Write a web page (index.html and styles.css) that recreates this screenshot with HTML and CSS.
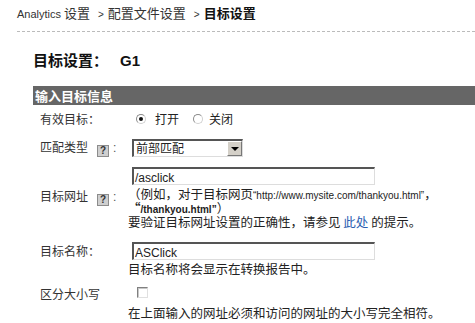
FILE: index.html
```html
<!DOCTYPE html>
<html lang="zh-CN">
<head>
<meta charset="utf-8">
<title>目标设置</title>
<link rel="stylesheet" href="styles.css">
</head>
<body>
<div class="crumbs">
  <span class="en">Analytics</span> 设置<span class="sep">&gt;</span>配置文件设置<span class="sep">&gt;</span><b>目标设置</b>
</div>
<h1 class="title">目标设置：<span class="g1">G1</span></h1>
<div class="panel">
  <div class="bar">输入目标信息</div>

  <div class="row r1">
    <div class="lbl">有效目标：</div>
    <div class="val radios">
      <span class="radio on"></span><span class="rtext">打开</span>
      <span class="radio second"></span><span class="rtext">关闭</span>
    </div>
  </div>

  <div class="row r2">
    <div class="lbl">匹配类型<span class="help">?</span><span class="colon">:</span></div>
    <div class="val">
      <div class="select"><span class="stext">前部匹配</span><span class="sbtn"><span class="tri"></span></span></div>
    </div>
  </div>

  <div class="row r3">
    <div class="lbl">目标网址<span class="help">?</span><span class="colon">:</span></div>
    <div class="val">
      <div class="input"><span class="itext">/asclick</span></div>
      <div class="note">（例如，对于目标网页<span class="url">“http://www.mysite.com/thankyou.html”</span>，<br><b><span class="q">“</span><span class="url">/thankyou.html”</span></b>）<br>要验证目标网址设置的正确性，请参见 <a class="link" href="#">此处</a> 的提示。</div>
    </div>
  </div>

  <div class="row r4">
    <div class="lbl">目标名称：</div>
    <div class="val">
      <div class="input"><span class="itext">ASClick</span></div>
      <div class="note">目标名称将会显示在转换报告中。</div>
    </div>
  </div>

  <div class="row r5">
    <div class="lbl">区分大小写</div>
    <div class="val">
      <div class="cbwrap"><span class="checkbox"></span></div>
      <div class="note">在上面输入的网址必须和访问的网址的大小写完全相符。</div>
    </div>
  </div>
</div>
</body>
</html>
```

FILE: styles.css
```css
* { box-sizing: border-box; }
body {
  margin: 0;
  background: #fff;
  color: #222;
  font-family: "Noto Sans CJK SC", sans-serif;
  font-size: 12px;
  overflow: hidden;
}
.en { font-family: "Liberation Sans", sans-serif; font-size: 11px; }

.crumbs {
  margin-left: 17px;
  height: 32px;
  padding-top: 6px;
  line-height: 14px;
  font-size: 13px;
  border-bottom: 1px dashed #bbb;
  color: #333;
  white-space: nowrap;
}
.crumbs .sep { font-family: "Liberation Sans", sans-serif; font-size: 10px; margin: 0 4px 0 8px; }
.crumbs b { color: #111; }

.title {
  margin: 18px 0 15px 33px;
  font-size: 15px;
  line-height: 20px;
  font-weight: bold;
  color: #111;
}
.title .g1 { font-family: "Liberation Sans", sans-serif; margin-left: 12px; }

.panel { margin-left: 33px; }
.bar {
  height: 19px;
  line-height: 19px;
  background: #666;
  color: #fff;
  font-weight: bold;
  font-size: 13px;
  padding-left: 2px;
}

.row {
  display: grid;
  grid-template-columns: 95px 1fr;
}
.lbl {
  padding-left: 7px;
  line-height: 14px;
  color: #333;
  white-space: nowrap;
}
.val { line-height: 14px; }

.r1 { height: 27px; align-items: center; }
.radios { display: flex; align-items: center; padding-left: 8px; }
.radio {
  width: 10px; height: 10px;
  border-radius: 50%;
  border: 1px solid #8a8a8a;
  border-right-color: #d0d0d0;
  border-bottom-color: #d0d0d0;
  background: #fff;
  position: relative;
}
.radio.on::after {
  content: "";
  position: absolute;
  left: 2px; top: 2px;
  width: 4px; height: 4px;
  border-radius: 50%;
  background: #111;
}
.rtext { margin-left: 9px; line-height: 14px; }
.radio.second { margin-left: 14px; }
.radio.second + .rtext { margin-left: 6px; }

.help {
  display: inline-block;
  vertical-align: -2px;
  width: 12px; height: 12px;
  margin-left: 9px;
  border: 1px solid #8c8c8c;
  background: #cfcfcf;
  color: #333;
  font-family: "Liberation Sans", sans-serif;
  font-weight: bold;
  font-size: 10px;
  line-height: 10px;
  text-align: center;
}
.colon { margin-left: 4px; font-family: "Liberation Sans", sans-serif; color: #555; }

.r2 { height: 32px; align-items: center; }
.select {
  margin-left: 4px;
  width: 111px;
  height: 18px;
  border-top: 2px solid #555;
  border-left: 2px solid #555;
  border-right: 1px solid #ddd;
  border-bottom: 1px solid #ddd;
  display: flex;
  align-items: stretch;
  background: #fff;
}
.stext { flex: 1; padding-left: 2px; line-height: 14px; }
.sbtn {
  width: 15px;
  background: #d4d0c8;
  border: 1px solid #fff;
  border-right-color: #777;
  border-bottom-color: #777;
  display: flex;
  align-items: center;
  justify-content: center;
}
.tri {
  width: 0; height: 0;
  border-left: 4px solid transparent;
  border-right: 4px solid transparent;
  border-top: 4px solid #000;
}

.input {
  margin-left: 4px;
  width: 243px;
  height: 18px;
  border-top: 2px solid #555;
  border-left: 2px solid #555;
  border-right: 1px solid #ddd;
  border-bottom: 1px solid #ddd;
  padding-left: 1px;
  line-height: 15px;
  color: #222;
  background: #fff;
}
.itext { font-family: "Liberation Sans", sans-serif; font-size: 12px; }
.note { margin-top: 2px; color: #222; font-size: 12.5px; line-height: 14px; }
.url { font-family: "Liberation Sans", sans-serif; font-size: 10px; line-height: 1px; }
.link { color: #2a5db0; text-decoration: none; }

.r3 { padding-top: 3px; padding-bottom: 10px; }
.r3 .lbl { padding-top: 22px; }
.r4 { padding-top: 3px; padding-bottom: 3px; }
.r4 .lbl { padding-top: 2px; }
.r5 .lbl { padding-top: 8px; }
.cbwrap { height: 25px; padding: 8px 0 0 9px; }
.checkbox {
  display: block;
  width: 11px; height: 11px;
  border-top: 1px solid #808080;
  border-left: 1px solid #808080;
  border-right: 1px solid #e0e0e0;
  border-bottom: 1px solid #e0e0e0;
  box-shadow: inset 1px 1px 0 #c8c8c8;
  background: #fff;
}
```
